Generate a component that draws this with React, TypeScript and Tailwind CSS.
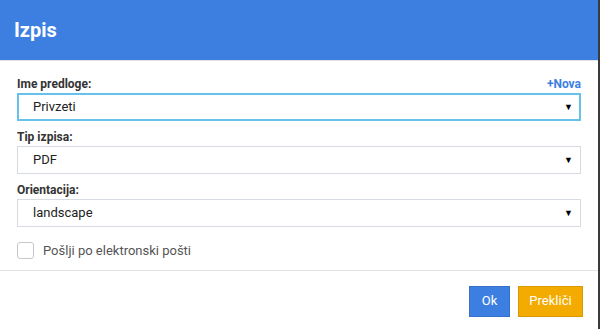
const Field = ({ label, value, focused, extra }: { label: string; value: string; focused?: boolean; extra?: React.ReactNode }) => (
  <div className="flex flex-col">
    <div className="flex h-[15px] items-end justify-between">
      <span className="text-[12px] font-bold leading-[15px] text-[#333]">{label}</span>
      {extra}
    </div>
    <div
      className={
        focused
          ? 'mt-[1px] flex h-[28px] items-center justify-between border-2 border-[#66c2ea] pl-[14px] pr-[6px]'
          : 'mt-[1px] flex h-[28px] items-center justify-between border border-[#d6dbe4] pl-[15px] pr-[7px]'
      }
    >
      <span className="text-[13px] text-[#222]">{value}</span>
      <span className="text-[9px] leading-none text-black">▼</span>
    </div>
  </div>
);

const App = () => {
  return (
    <div className="flex h-[329px] w-[600px] bg-[#2c4a38]" style={{ fontFamily: 'Roboto, "Liberation Sans", sans-serif' }}>
      <div className="flex w-[598px] shrink-0 flex-col bg-white">
        {/* Header */}
        <div className="flex h-[61px] shrink-0 items-center border-b border-[#e2e2e2] bg-[#3d7fe1] px-[14px]">
          <h1 className="text-[20px] font-bold text-white">Izpis</h1>
        </div>

        {/* Body */}
        <div className="flex shrink-0 flex-col gap-[9px] border-b border-[#e2e2e2] px-[17px] pb-[9px] pt-[16px]">
          <Field
            label="Ime predloge:"
            value="Privzeti"
            focused
            extra={<span className="text-[12px] font-bold leading-[15px] text-[#3d7fe1]">+Nova</span>}
          />
          <Field label="Tip izpisa:" value="PDF" />
          <Field label="Orientacija:" value="landscape" />
          <label className="mt-[5px] flex items-center gap-[9px]">
            <span className="h-[17px] w-[17px] rounded-[3px] border border-[#c8c8c8] bg-white" />
            <span className="text-[13px] text-[#555]">Pošlji po elektronski pošti</span>
          </label>
        </div>

        {/* Footer */}
        <div className="flex shrink-0 justify-end gap-[8px] px-[15px] pt-[15px]">
          <button type="button" className="h-[31px] w-[41px] border border-[#3670c8] bg-[#3d7fe1] text-[13px] text-white">
            Ok
          </button>
          <button type="button" className="h-[31px] w-[65px] border border-[#d99900] bg-[#f3ab00] text-[13px] text-white">
            Prekliči
          </button>
        </div>
      </div>
      <div className="w-[2px] bg-[#3a3a3a]" />
    </div>
  );
};

export default App;
